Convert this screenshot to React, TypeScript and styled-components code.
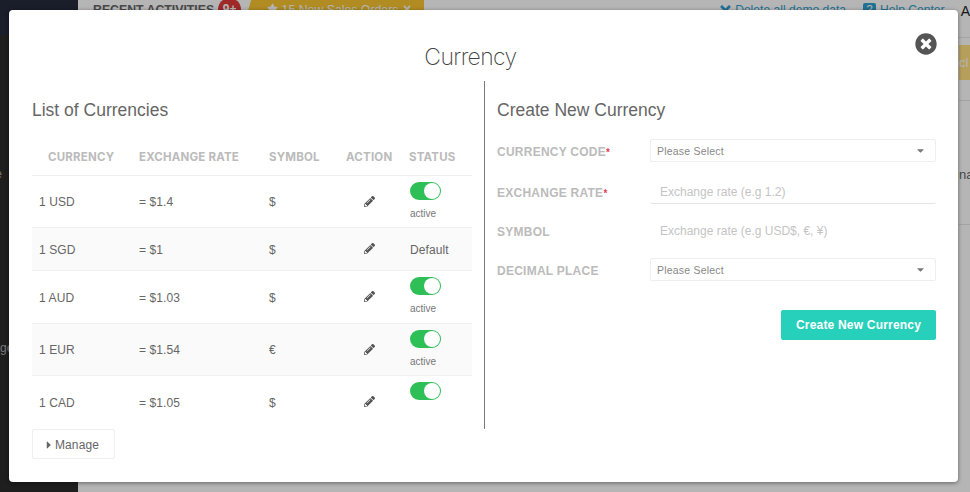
import { FaCaretDown, FaCaretRight, FaPencilAlt, FaStar, FaTimes, FaTimesCircle } from "react-icons/fa";
import styled, { createGlobalStyle } from "styled-components";

const GlobalStyle = createGlobalStyle`
  html, body {
    margin: 0;
    height: 100%;
    overflow: hidden;
    font-family: "Liberation Sans", Arial, sans-serif;
    color: #666;
  }
  #root {
    height: 100%;
  }
`;

const Page = styled.div`
  position: relative;
  display: flex;
  width: 970px;
  height: 492px;
  overflow: hidden;
  background: #fff;
`;
const Sidebar = styled.div`
  width: 78px;
  flex: none;
  background: #2b2b2d;
  color: #aaa;
  font-size: 12px;
  overflow: hidden;
`;
const SideLogo = styled.div`
  height: 35px;
  background: #252b3d;
`;
const SideItem = styled.div<{ $gap: number }>`
  margin-top: ${(p) => p.$gap}px;
  margin-left: -30px;
  white-space: nowrap;
  text-align: left;
`;
const Main = styled.div`
  flex: 1;
  min-width: 0;
`;
const TopBar = styled.div`
  display: flex;
  align-items: flex-start;
  height: 34px;
  box-sizing: content-box;
  padding: 3px 0 0 15px;
  margin-bottom: -1px;
  border-bottom: 1px solid #e8e8e8;
  font-size: 12.3px;
  white-space: nowrap;
`;
const RecentTitle = styled.span`
  flex: none;
  font-weight: 700;
  color: #666;
`;
const Badge = styled.span`
  flex: none;
  width: 23px;
  height: 23px;
  margin: -5px 0 0 4px;
  border-radius: 50%;
  background: #e03a3a;
  color: #fff;
  font-size: 12px;
  font-weight: 700;
  text-align: center;
  line-height: 23px;
`;
const Notice = styled.span`
  flex: none;
  width: 179px;
  height: 20px;
  margin: -3px 0 0 4px;
  box-sizing: border-box;
  padding: 3px 0 0 22px;
  background: #f8c630;
  color: #fff;
  clip-path: polygon(6px 0, 100% 0, 100% 100%, 0 100%);
`;
const TopLink = styled.span<{ $left: number }>`
  flex: none;
  display: inline-flex;
  align-items: flex-start;
  gap: 2px;
  margin-left: ${(p) => p.$left}px;
  font-size: 12.1px;
  color: #2f9fd0;
`;
const HelpSquare = styled.span`
  width: 13px;
  height: 13px;
  margin-right: 2px;
  border-radius: 2px;
  background: #2f9fd0;
  color: #fff;
  font-size: 11px;
  line-height: 13px;
  text-align: center;
`;
const UserLetter = styled.span`
  margin-left: 16px;
  color: #222;
  font-size: 14px;
`;
const Content = styled.div`
  padding-left: 881px;
  font-size: 13px;
  white-space: nowrap;
`;
const YellowButton = styled.div`
  width: 80px;
  height: 35px;
  margin-top: 8px;
  background: #ffe07f;
  color: #fff;
  line-height: 35px;
`;
const Rule = styled.div<{ $top: number }>`
  margin-top: ${(p) => p.$top}px;
  border-top: 1px solid #e6e6e6;
`;
const StrayText = styled.div`
  margin-top: 66px;
  color: #666;
`;
const Overlay = styled.div`
  position: absolute;
  inset: 0;
  background: rgba(0, 0, 0, 0.29);
`;

const Modal = styled.div`
  position: absolute;
  top: 10px;
  left: 9px;
  width: 949px;
  height: 472px;
  box-sizing: border-box;
  padding: 30px 23px 0;
  background: #fff;
  border-radius: 4px;
  box-shadow: 0 1px 4px rgba(0, 0, 0, 0.45);
`;
const Title = styled.h1`
  margin: 0;
  height: 41px;
  padding-right: 26px;
  font-family: Inter, "Liberation Sans", sans-serif;
  font-size: 23px;
  font-weight: 200;
  line-height: 34px;
  letter-spacing: -0.6px;
  text-align: center;
  color: #444;
`;
const CloseButton = styled.button`
  position: absolute;
  top: 23px;
  left: 906px;
  display: flex;
  padding: 0;
  border: 0;
  background: none;
  color: #555;
  font-size: 22px;
`;
const Columns = styled.div`
  display: grid;
  grid-template-columns: 453px 1fr;
  height: 348px;
`;
const LeftPanel = styled.div`
  border-right: 1px solid #7b7b7b;
  padding-right: 12px;
  overflow: hidden;
`;
const RightPanel = styled.div`
  padding: 0 0 0 12px;
  width: 439px;
`;
const PanelTitle = styled.h2`
  margin: 18px 0;
  font-size: 17.5px;
  font-weight: 400;
  line-height: 22px;
  color: #666;
`;
const CurrencyTable = styled.table`
  width: 440px;
  margin-top: 19px;
  border-collapse: collapse;
  table-layout: fixed;
`;
const HeadCell = styled.th<{ $pad?: number; $w: number }>`
  width: ${(p) => p.$w}px;
  height: 35px;
  padding: 0 0 0 ${(p) => p.$pad ?? 7}px;
  box-sizing: border-box;
  font-family: Inter, "Liberation Sans", sans-serif;
  font-size: 11.5px;
  font-weight: 700;
  letter-spacing: 0.2px;
  text-align: left;
  color: #bbb;
  border-bottom: 1px solid #efefef;
`;
const Row = styled.tr<{ $h: number; $shade?: boolean }>`
  height: ${(p) => p.$h}px;
  background: ${(p) => (p.$shade ? "#fafafa" : "#fff")};
  border-bottom: 1px solid #f0f0f0;
  &:last-child {
    border-bottom: 0;
  }
`;
const Cell = styled.td`
  padding: 2px 0 0 7px;
  font-size: 12px;
  letter-spacing: 0.1px;
  color: #666;
  vertical-align: middle;
`;
const ActionCell = styled.td`
  padding: 2px 3px 0 0;
  text-align: center;
  vertical-align: middle;
  color: #555;
  font-size: 11px;
`;
const StatusCell = styled.td`
  padding: 0 0 0 8px;
  vertical-align: top;
`;
const DefaultLabel = styled.div`
  margin-top: 15px;
  font-size: 12px;
  letter-spacing: 0.1px;
  color: #666;
`;
const Toggle = styled.div`
  position: relative;
  width: 31px;
  height: 18px;
  margin-top: 6px;
  border-radius: 9px;
  background: #2fbf57;
`;
const Knob = styled.span`
  position: absolute;
  top: 1px;
  right: 1px;
  width: 16px;
  height: 16px;
  border-radius: 50%;
  background: #fff;
`;
const StatusText = styled.div`
  margin-top: 8px;
  font-size: 10px;
  color: #777;
`;
const ManageButton = styled.button`
  display: flex;
  align-items: center;
  width: 83px;
  height: 30px;
  padding: 1px 0 0 10px;
  border: 1px solid #eee;
  border-radius: 2px;
  background: #fff;
  font-family: inherit;
  font-size: 12px;
  letter-spacing: 0.1px;
  color: #666;
`;
const FormRow = styled.div<{ $h: number; $after: number }>`
  display: grid;
  grid-template-columns: 153px 286px;
  align-items: center;
  height: ${(p) => p.$h}px;
  margin-bottom: ${(p) => p.$after}px;
`;
const FieldLabel = styled.label`
  padding-top: 2px;
  font-size: 12px;
  font-weight: 700;
  letter-spacing: 0.25px;
  color: #bbb;
`;
const Required = styled.span`
  font-size: 10px;
  color: #e8434f;
`;
const SelectBox = styled.div`
  display: flex;
  align-items: center;
  justify-content: space-between;
  height: 23px;
  box-sizing: border-box;
  padding: 0 9px 0 6px;
  border: 1px solid #eee;
  border-radius: 2px;
  font-size: 10.5px;
  letter-spacing: 0.2px;
  color: #888;
`;
const TextField = styled.input<{ $underline?: boolean }>`
  width: 100%;
  height: 24px;
  box-sizing: border-box;
  padding: 0 0 0 10px;
  border: 0;
  border-bottom: 1px solid ${(p) => (p.$underline ? "#e6e6e6" : "transparent")};
  border-radius: 2px;
  font-family: inherit;
  font-size: 12px;
  outline: none;
  &::placeholder {
    color: #c4c4c4;
    opacity: 1;
  }
`;
const FormActions = styled.div`
  display: flex;
  justify-content: flex-end;
  margin-top: 29px;
`;
const SubmitButton = styled.button`
  width: 155px;
  height: 30px;
  border: 0;
  border-radius: 2px;
  background: #26d0bb;
  color: #fff;
  font-family: inherit;
  font-size: 12px;
  font-weight: 700;
  letter-spacing: 0.2px;
`;

type Currency = {
  code: string;
  rate: string;
  symbol: string;
  height: number;
  status: "active" | "default" | "clipped";
};

const currencies: Currency[] = [
  { code: "1 USD", rate: "= $1.4", symbol: "$", height: 52, status: "active" },
  { code: "1 SGD", rate: "= $1", symbol: "$", height: 43, status: "default" },
  { code: "1 AUD", rate: "= $1.03", symbol: "$", height: 53, status: "active" },
  { code: "1 EUR", rate: "= $1.54", symbol: "€", height: 52, status: "active" },
  { code: "1 CAD", rate: "= $1.05", symbol: "$", height: 53, status: "clipped" },
];

const Status = ({ status }: { status: Currency["status"] }) => {
  if (status === "default") return <DefaultLabel>Default</DefaultLabel>;
  return (
    <>
      <Toggle>
        <Knob />
      </Toggle>
      {status === "active" && <StatusText>active</StatusText>}
    </>
  );
};

const App = () => {
  return (
    <Page>
      <GlobalStyle />
      <Sidebar>
        <SideLogo />
        <SideItem $gap={132}>Home</SideItem>
        <SideItem $gap={160}>Manage</SideItem>
      </Sidebar>
      <Main>
        <TopBar>
          <RecentTitle>RECENT ACTIVITIES</RecentTitle>
          <Badge>9+</Badge>
          <Notice>
            <FaStar size={11} /> 15 New Sales Orders <FaTimes size={10} />
          </Notice>
          <TopLink $left={294}>
            <FaTimes size={15} />
            Delete all demo data
          </TopLink>
          <TopLink $left={17}>
            <HelpSquare>?</HelpSquare>
            Help Center
          </TopLink>
          <UserLetter>A</UserLetter>
        </TopBar>
        <Content>
          <YellowButton>cl</YellowButton>
          <Rule $top={20} />
          <StrayText>na</StrayText>
          <Rule $top={42} />
        </Content>
      </Main>
      <Overlay />
      <Modal>
        <Title>Currency</Title>
        <CloseButton aria-label="Close">
          <FaTimesCircle />
        </CloseButton>
        <Columns>
          <LeftPanel>
            <PanelTitle>List of Currencies</PanelTitle>
            <CurrencyTable>
              <thead>
                <tr>
                  <HeadCell $w={100} $pad={16}>CURRENCY</HeadCell>
                  <HeadCell $w={130}>EXCHANGE RATE</HeadCell>
                  <HeadCell $w={77}>SYMBOL</HeadCell>
                  <HeadCell $w={63}>ACTION</HeadCell>
                  <HeadCell $w={70}>STATUS</HeadCell>
                </tr>
              </thead>
              <tbody>
                {currencies.map((c, i) => (
                  <Row key={c.code} $h={c.height} $shade={i % 2 === 1}>
                    <Cell>{c.code}</Cell>
                    <Cell>{c.rate}</Cell>
                    <Cell>{c.symbol}</Cell>
                    <ActionCell>
                      <FaPencilAlt />
                    </ActionCell>
                    <StatusCell>
                      <Status status={c.status} />
                    </StatusCell>
                  </Row>
                ))}
              </tbody>
            </CurrencyTable>
          </LeftPanel>
          <RightPanel>
            <PanelTitle>Create New Currency</PanelTitle>
            <FormRow $h={23} $after={18}>
              <FieldLabel>
                CURRENCY CODE<Required>*</Required>
              </FieldLabel>
              <SelectBox>
                Please Select
                <FaCaretDown size={11} color="#777" />
              </SelectBox>
            </FormRow>
            <FormRow $h={24} $after={15}>
              <FieldLabel>
                EXCHANGE RATE<Required>*</Required>
              </FieldLabel>
              <TextField $underline placeholder="Exchange rate (e.g 1.2)" />
            </FormRow>
            <FormRow $h={23} $after={16}>
              <FieldLabel>SYMBOL</FieldLabel>
              <TextField placeholder="Exchange rate (e.g USD$, €, ¥)" />
            </FormRow>
            <FormRow $h={23} $after={0}>
              <FieldLabel>DECIMAL PLACE</FieldLabel>
              <SelectBox>
                Please Select
                <FaCaretDown size={11} color="#777" />
              </SelectBox>
            </FormRow>
            <FormActions>
              <SubmitButton>Create New Currency</SubmitButton>
            </FormActions>
          </RightPanel>
        </Columns>
        <ManageButton>
          <FaCaretRight size={12} />
          Manage
        </ManageButton>
      </Modal>
    </Page>
  );
};

export default App;
